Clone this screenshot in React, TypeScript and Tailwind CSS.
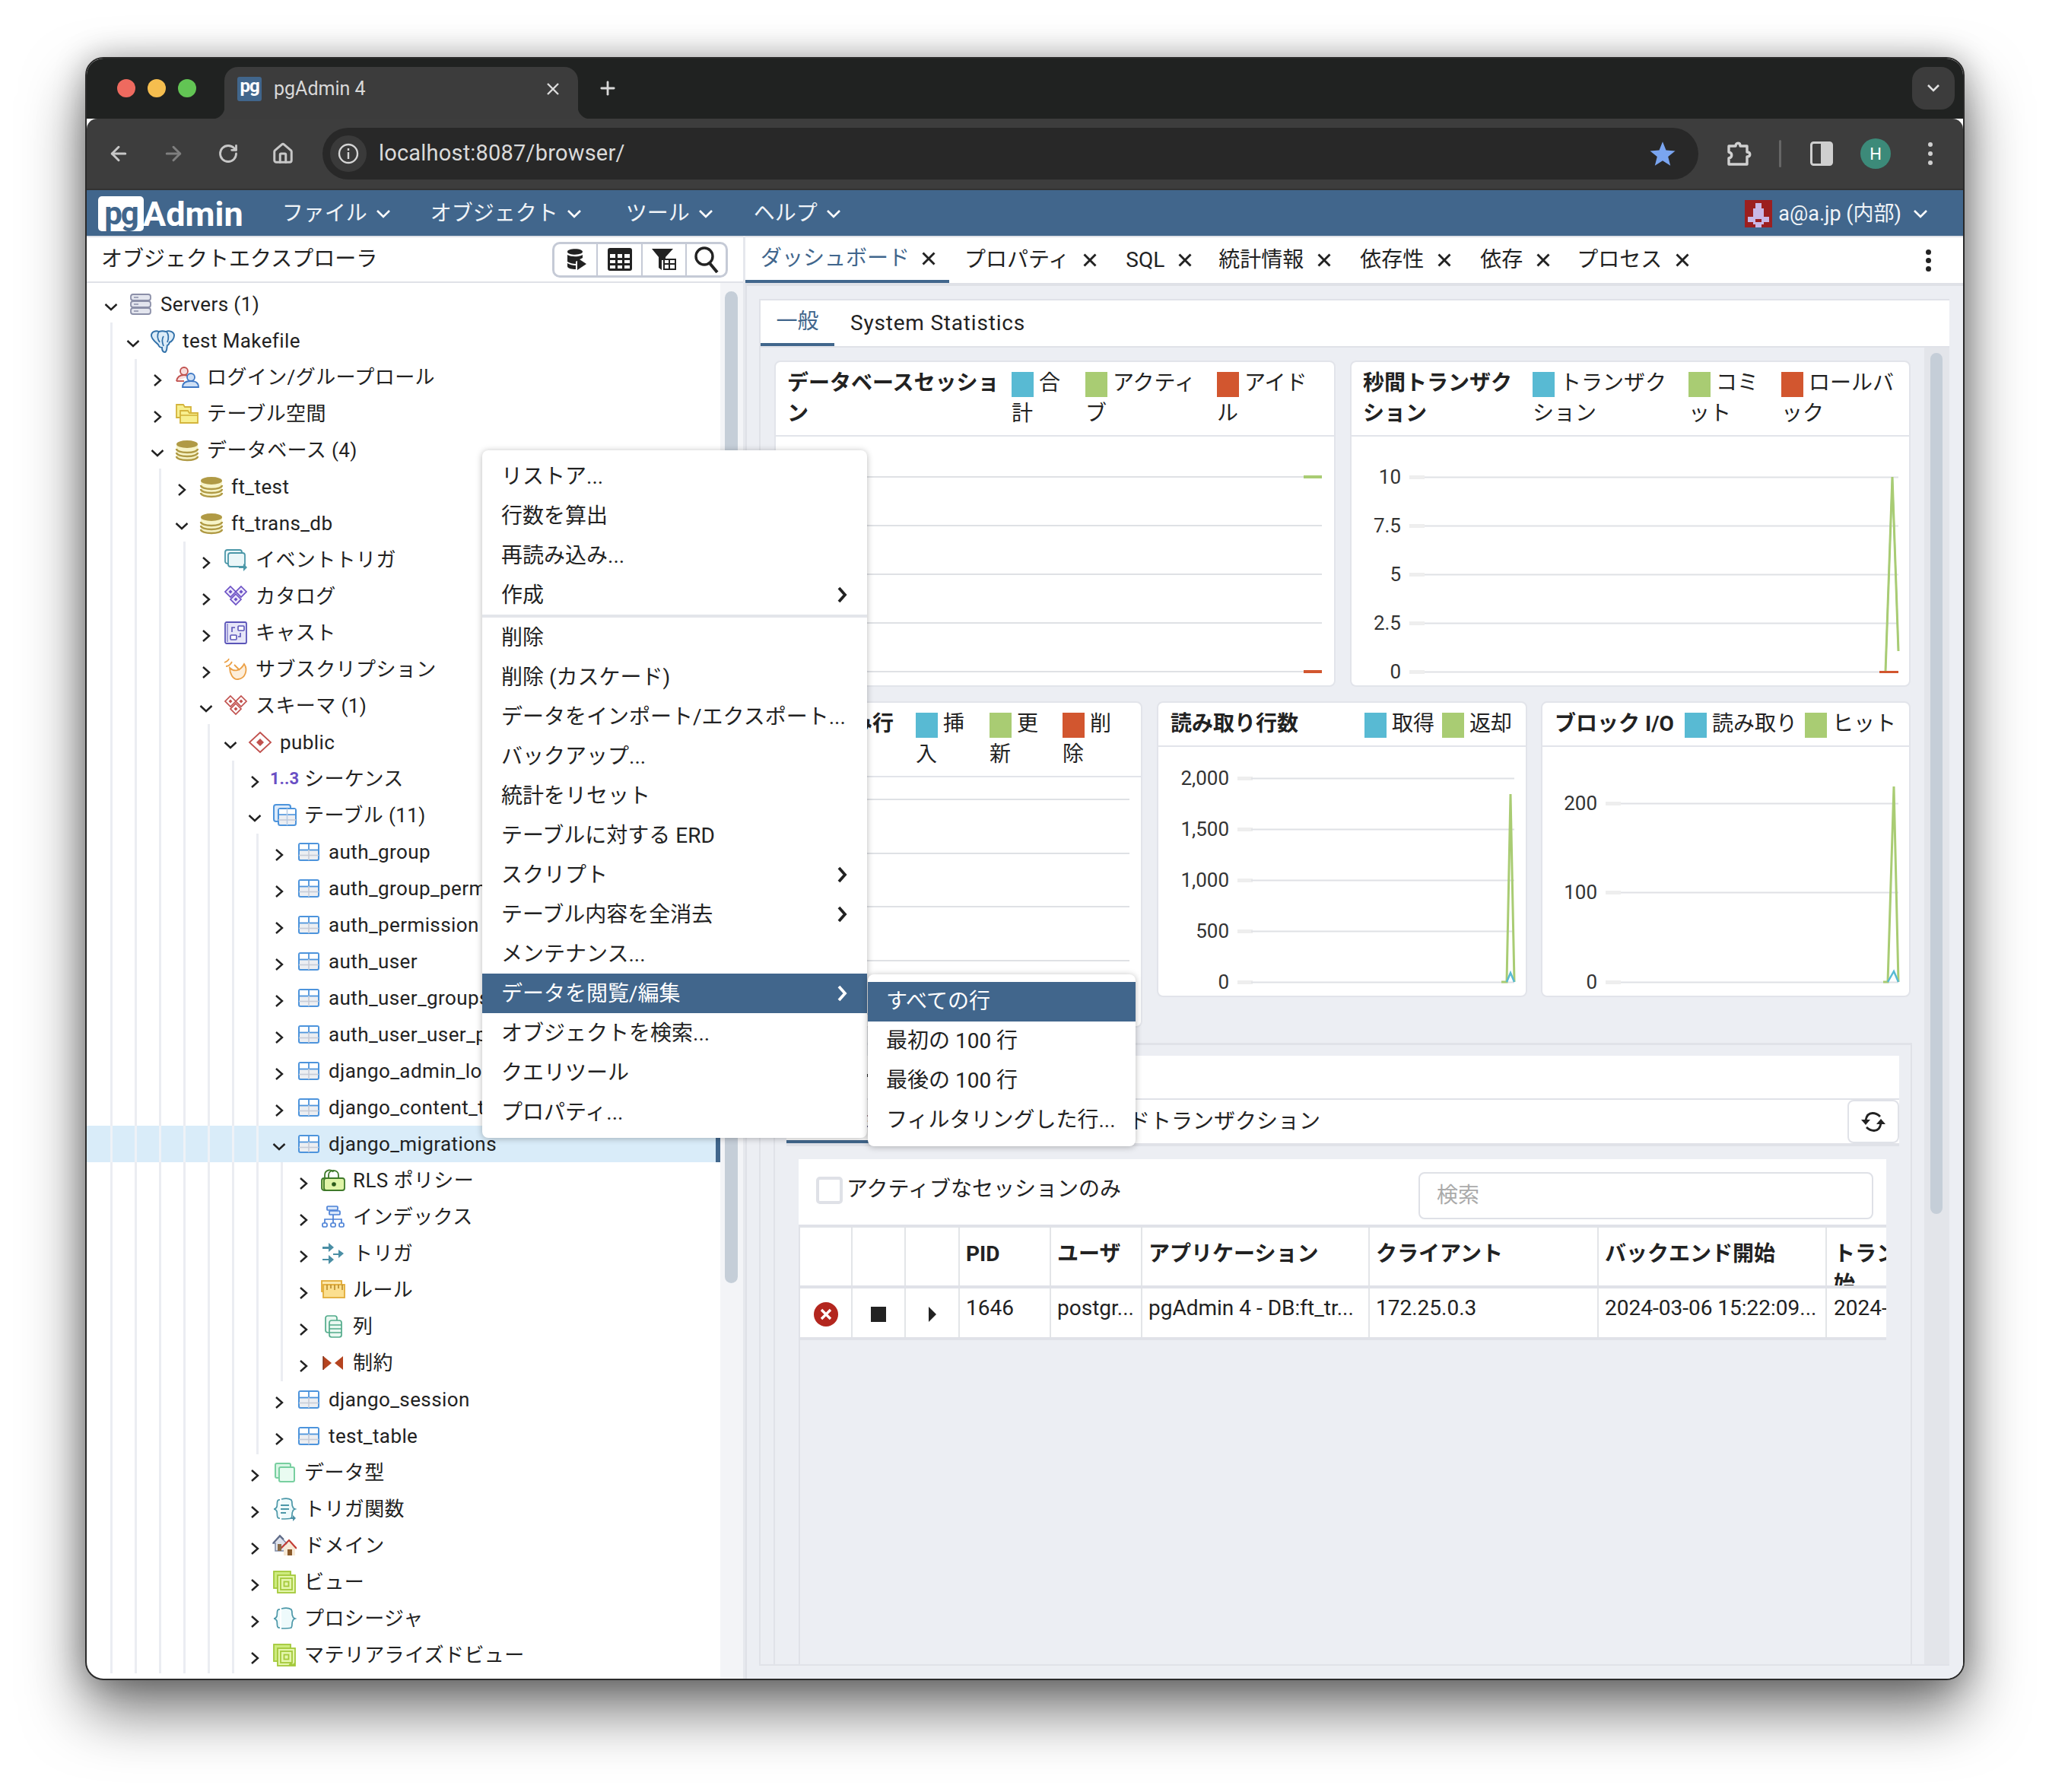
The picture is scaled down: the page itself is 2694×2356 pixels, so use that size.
import React from "react";
import { ArrowLeft, ArrowRight, RotateCw, Home, Plus } from "lucide-react";

const ChevR = () => (
  <svg width="14" height="18" viewBox="0 0 14 18" fill="none" stroke="#222" strokeWidth="2.4"><path d="M3 2l8 7-8 7" /></svg>
);
const ChevD = () => (
  <svg width="18" height="12" viewBox="0 0 18 12" fill="none" stroke="#222" strokeWidth="2.4"><path d="M1.5 2l7.5 7 7.5-7" /></svg>
);
const NavChev = () => (
  <svg width="20" height="14" viewBox="0 0 20 14" fill="none" stroke="#fff" strokeWidth="2.6"><path d="M2 3l8 8 8-8" /></svg>
);
const Xi = () => (
  <svg width="20" height="20" viewBox="0 0 20 20" fill="none" stroke="#222" strokeWidth="2.9"><path d="M2.5 2.5l15 15M17.5 2.5l-15 15" /></svg>
);

const S = ({ children }: { children: React.ReactNode }) => (
  <svg width="32" height="32" viewBox="0 0 32 32" fill="none">{children}</svg>
);

const IServers = () => (
  <S>
    {[3, 12, 21].map((y) => (
      <g key={y}>
        <rect x="3" y={y} width="26" height="8" rx="3" fill="#e3e5ee" stroke="#8b8fa8" strokeWidth="1.8" />
        <path d={`M7 ${y + 4}h6`} stroke="#8b8fa8" strokeWidth="1.5" />
      </g>
    ))}
  </S>
);
const IPg = () => (
  <S>
    <path d="M1 9c0-5 6-7 10-5 3-1 6-1 9 0 4-2 11 0 11 5 0 4-3 8-6 9-1 2-1 4-3 4-1 3 0 8-3 9-3 0-4-2-4-6-2 0-4-1-5-4-3-3-9-7-9-12z" fill="#dcecf8" stroke="#2f6fa8" strokeWidth="1.9" />
    <path d="M11 4c-3 4-2 10 1 14M21 4c3 4 3 9 1 14M17 10c-2 3-2 8 0 13" stroke="#2f6fa8" strokeWidth="1.7" />
  </S>
);
const IRoles = () => (
  <S>
    <circle cx="12" cy="8" r="5" fill="#f8dcdc" stroke="#c0504d" strokeWidth="1.8" />
    <path d="M2 21c1-6 5-8 10-8 3 0 5 1 6 2" stroke="#c0504d" strokeWidth="1.8" fill="#f8dcdc" />
    <path d="M2 21h10" stroke="#c0504d" strokeWidth="1.8" />
    <circle cx="21" cy="16" r="5" fill="#cfe0f5" stroke="#3f78c4" strokeWidth="1.8" />
    <path d="M10 29c0-6 5-8 11-8s10 2 10 8z" fill="#cfe0f5" stroke="#3f78c4" strokeWidth="1.8" />
  </S>
);
const ITablespace = () => (
  <S>
    <path d="M2 4h9l2 3h8v14H2z" fill="#f7ef8f" stroke="#d4b43c" strokeWidth="1.8" />
    <path d="M7 12h10l2 3h11v13H7z" fill="#f7ef8f" stroke="#d4b43c" strokeWidth="1.8" />
    <path d="M7 18h23" stroke="#d4b43c" strokeWidth="1.6" />
  </S>
);
const IDb = () => (
  <S>
    <path d="M2 8v16c0 3 6 5 14 5s14-2 14-5V8z" fill="#f7f4c8" />
    <ellipse cx="16" cy="8" rx="14" ry="5" fill="#b09a45" />
    <path d="M2 14c0 3 6 5 14 5s14-2 14-5M2 19c0 3 6 5 14 5s14-2 14-5M2 24c0 3 6 5 14 5s14-2 14-5" stroke="#b09a45" strokeWidth="2.4" />
  </S>
);
const IEvent = () => (
  <S>
    <rect x="2" y="3" width="22" height="18" rx="3" fill="#eaf6f8" stroke="#4b97a8" strokeWidth="1.8" />
    <rect x="6" y="7" width="22" height="18" rx="3" fill="#eaf6f8" stroke="#4b97a8" strokeWidth="1.8" />
    <path d="M20 26h8" stroke="#4b97a8" strokeWidth="2" />
    <path d="M26 21l5 5-5 5z" fill="#4b97a8" />
  </S>
);
const Diamonds = ({ c, f }: { c: string; f: string }) => (
  <S>
    {[
      [9, 10],
      [23, 10],
      [16, 20],
    ].map(([x, y]) => (
      <g key={x + "-" + y}>
        <path d={`M${x} ${y - 7}l7 7-7 7-7-7z`} fill={f} stroke={c} strokeWidth="1.7" />
        <path d={`M${x} ${y - 2.5}l2.5 2.5-2.5 2.5-2.5-2.5z`} fill={c} />
      </g>
    ))}
  </S>
);
const ICast = () => (
  <S>
    <rect x="2" y="2" width="28" height="28" rx="2" fill="#e6e6f8" stroke="#5a54b8" strokeWidth="1.8" />
    <path d="M5 4v24" stroke="#5a54b8" strokeWidth="1" />
    <rect x="9" y="19" width="8" height="6" rx="1" fill="#fff" stroke="#5a54b8" strokeWidth="1.6" />
    <rect x="19" y="7" width="8" height="6" rx="1" fill="#fff" stroke="#5a54b8" strokeWidth="1.6" />
    <path d="M15 9h-4v6M22 16v5h-3" stroke="#5a54b8" strokeWidth="1.6" />
  </S>
);
const ISub = () => (
  <S>
    <path d="M8 14c6 6 14 4 19-5 5 7 2 19-8 20-7 1-11-8-11-15z" fill="#fdeeda" stroke="#eba046" strokeWidth="1.8" />
    <path d="M14 10l7 7M1 7c3-1 5-2 6-5M3 12c3 0 6-2 8-6" stroke="#eba046" strokeWidth="1.8" />
  </S>
);
const IPublic = () => (
  <S>
    <path d="M16 3l14 13-14 13L2 16z" fill="#fff" stroke="#c0504d" strokeWidth="1.8" />
    <path d="M16 11l5 5-5 5-5-5z" fill="#c0504d" />
  </S>
);
const ITables = () => (
  <S>
    <rect x="2" y="2" width="22" height="22" rx="3" fill="#dceafa" stroke="#4d94dc" strokeWidth="2" />
    <rect x="8" y="7" width="23" height="22" rx="2.5" fill="#eceef2" stroke="#4d94dc" strokeWidth="2" />
    <rect x="9" y="8" width="21" height="7" fill="#fff" />
    <path d="M8 15h23" stroke="#4d94dc" strokeWidth="1.6" />
    <path d="M8 22h23" stroke="#c7cbd6" strokeWidth="1.6" />
    <path d="M19.5 7v22" stroke="#b9cbe4" strokeWidth="1.6" />
  </S>
);
const ITable = () => (
  <S>
    <rect x="3" y="5" width="26" height="22" rx="2" fill="#eceef2" stroke="#4d94dc" strokeWidth="2" />
    <rect x="4" y="6" width="24" height="7" fill="#fff" />
    <path d="M3 13.5h26" stroke="#4d94dc" strokeWidth="1.8" />
    <path d="M3 20.5h26" stroke="#c7cbd6" strokeWidth="1.6" />
    <path d="M16 5v8" stroke="#4d94dc" strokeWidth="1.8" />
    <path d="M16 13v14" stroke="#c7cbd6" strokeWidth="1.6" />
  </S>
);
const ILock = () => (
  <S>
    <path d="M5 13V9c0-8 10-8 11-4" stroke="#3f7a2a" strokeWidth="1.8" />
    <rect x="1" y="13" width="20" height="16" rx="3" fill="#cde88f" stroke="#3f7a2a" strokeWidth="1.8" />
    <path d="M10 13V9c0-8 13-8 13 0v4" stroke="#3f7a2a" strokeWidth="1.8" />
    <rect x="4" y="13" width="27" height="16" rx="3" fill="#e0f4a8" stroke="#3f7a2a" strokeWidth="1.8" />
    <circle cx="17" cy="21" r="2.8" fill="#2b5a1b" />
  </S>
);
const IIndex = () => (
  <S>
    <rect x="8" y="2" width="14" height="5" rx="1" fill="#dbe8fa" stroke="#4a80d6" strokeWidth="1.7" />
    <rect x="11" y="8" width="14" height="5" rx="1" fill="#dbe8fa" stroke="#4a80d6" strokeWidth="1.7" />
    <path d="M16 13v6M5 24v-5h22v5M16 19v5" stroke="#4a80d6" strokeWidth="1.7" />
    <rect x="2" y="24" width="6" height="5" rx="1.5" fill="#fff" stroke="#4a80d6" strokeWidth="1.7" />
    <rect x="13" y="24" width="6" height="5" rx="1.5" fill="#fff" stroke="#4a80d6" strokeWidth="1.7" />
    <rect x="24" y="24" width="6" height="5" rx="1.5" fill="#fff" stroke="#4a80d6" strokeWidth="1.7" />
  </S>
);
const ITrig = () => (
  <S>
    <g fill="#4b8fa5">
      <path d="M2 7h8V2l7 6-7 6v-4H2z" />
      <path d="M16 16h7v-5l7 5-7 6v-4h-7z" />
      <path d="M2 23h8v-5l7 6-7 6v-5H2z" />
    </g>
  </S>
);
const IRule = () => (
  <S>
    <rect x="1" y="4" width="26" height="14" fill="#fbe7ad" stroke="#e2ac38" strokeWidth="1.8" />
    <rect x="3" y="9" width="28" height="17" fill="#fbdf8f" stroke="#e2ac38" strokeWidth="1.8" />
    <path d="M8 9v7M13 9v5M18 9v7M23 9v5M28 9v7" stroke="#b98a2a" strokeWidth="1.6" />
  </S>
);
const ICols = () => (
  <S>
    <rect x="6" y="2" width="15" height="22" rx="3" fill="#eaf8f1" stroke="#52ab8b" strokeWidth="1.7" />
    <rect x="11" y="8" width="16" height="22" rx="3" fill="#eaf8f1" stroke="#52ab8b" strokeWidth="1.7" />
    <path d="M11 14h16M11 19h16M11 24h16" stroke="#52ab8b" strokeWidth="1.6" />
  </S>
);
const IConstraint = () => (
  <S>
    <path d="M3 7l11 9-11 9z" fill="#b5441f" />
    <path d="M29 7L18 16l11 9z" fill="#b5441f" />
    <path d="M3 7v18" stroke="#7a2c12" strokeWidth="1.4" />
  </S>
);
const IType = () => (
  <S>
    <rect x="4" y="4" width="20" height="19" rx="2" fill="#d9f5e5" stroke="#78cfa0" strokeWidth="2" />
    <rect x="9" y="9" width="20" height="19" rx="2" fill="#e9fbf1" stroke="#78cfa0" strokeWidth="2" />
  </S>
);
const Brace = ({ lines }: { lines?: boolean }) => (
  <S>
    <path d="M10 4C5 3 7 10 6 13c-1 2-3 3-4 3 1 0 3 1 4 3 1 3-1 10 4 9M12 3c4-1 10-1 13 1 2 3 0 7 2 9 0 2 3 3 3 3s-3 1-3 3c-2 2 0 6-2 9-3 1-9 1-13 1" fill="#eefafb" stroke="#4b97a8" strokeWidth="1.7" />
    {lines && <path d="M11 11h11M11 16h11M11 21h7" stroke="#4b97a8" strokeWidth="1.8" />}
    {lines && <path d="M24 27h3v-3l4 4-4 4v-3h-3z" fill="#4b8fa5" />}
  </S>
);
const IDomain = () => (
  <S>
    <path d="M1 13L10 4l9 9v10H4V13z" fill="#dfe3ec" stroke="#7f8aa5" strokeWidth="1.5" />
    <path d="M1 13L10 3l5 5" stroke="#5f6b88" strokeWidth="2" />
    <path d="M14 19l8-8 8 8v10H15V19z" fill="#f7e9d6" />
    <path d="M11 20L22 9l10 11" stroke="#c23b33" strokeWidth="2.2" fill="none" />
    <rect x="20" y="21" width="6" height="8" fill="#8a5a2b" />
    <rect x="7" y="14" width="5" height="9" fill="#8a6a45" />
  </S>
);
const IView = ({ m }: { m?: boolean }) => (
  <S>
    <rect x="2" y="2" width="22" height="22" fill="#cdeb7e" stroke="#a4c93b" strokeWidth="1.8" />
    <rect x="7" y="7" width="23" height="23" fill="#e4f6ac" stroke="#a4c93b" strokeWidth="1.8" />
    <rect x="11" y="11" width="15" height="15" fill="none" stroke="#a4c93b" strokeWidth="1.8" />
    <rect x="15.5" y="15.5" width="6" height="6" fill="none" stroke="#a4c93b" strokeWidth="1.8" />
    {m && <path d="M21 30l3-5 3 3 3-3v5" fill="#a4c93b" />}
  </S>
);
const ISeq = () => (
  <span className="whitespace-nowrap text-[22px] font-bold leading-none text-[#6a4fc4]">1..3</span>
);

const Sync = () => (
  <svg width="34" height="28" viewBox="0 0 34 28" fill="none" stroke="#222" strokeWidth="2.8">
    <path d="M26 7C23 4 20 2.5 16 2.5 11 2.5 8 6 7 12" />
    <path d="M8 21c3 3 6 4.5 10 4.5 5 0 8-3.500 9-9.500" />
    <path d="M1 11h12l-6 7z" fill="#222" stroke="none" />
    <path d="M21 17h12l-6-7z" fill="#222" stroke="none" />
  </svg>
);

type R = { d: number; t: string; i: React.ReactNode; o?: boolean; sel?: boolean };
const tbl = (t: string, o?: boolean, sel?: boolean): R => ({ d: 7, t, i: <ITable />, o, sel });
const rows: R[] = [
  { d: 0, t: "Servers (1)", i: <IServers />, o: true },
  { d: 1, t: "test Makefile", i: <IPg />, o: true },
  { d: 2, t: "ログイン/グループロール", i: <IRoles /> },
  { d: 2, t: "テーブル空間", i: <ITablespace /> },
  { d: 2, t: "データベース (4)", i: <IDb />, o: true },
  { d: 3, t: "ft_test", i: <IDb /> },
  { d: 3, t: "ft_trans_db", i: <IDb />, o: true },
  { d: 4, t: "イベントトリガ", i: <IEvent /> },
  { d: 4, t: "カタログ", i: <Diamonds c="#6a4fc4" f="#ece8fb" /> },
  { d: 4, t: "キャスト", i: <ICast /> },
  { d: 4, t: "サブスクリプション", i: <ISub /> },
  { d: 4, t: "スキーマ (1)", i: <Diamonds c="#c0504d" f="#fff" />, o: true },
  { d: 5, t: "public", i: <IPublic />, o: true },
  { d: 6, t: "シーケンス", i: <ISeq /> },
  { d: 6, t: "テーブル (11)", i: <ITables />, o: true },
  tbl("auth_group"),
  tbl("auth_group_permissions"),
  tbl("auth_permission"),
  tbl("auth_user"),
  tbl("auth_user_groups"),
  tbl("auth_user_user_permissions"),
  tbl("django_admin_log"),
  tbl("django_content_type"),
  tbl("django_migrations", true, true),
  { d: 8, t: "RLS ポリシー", i: <ILock /> },
  { d: 8, t: "インデックス", i: <IIndex /> },
  { d: 8, t: "トリガ", i: <ITrig /> },
  { d: 8, t: "ルール", i: <IRule /> },
  { d: 8, t: "列", i: <ICols /> },
  { d: 8, t: "制約", i: <IConstraint /> },
  tbl("django_session"),
  tbl("test_table"),
  { d: 6, t: "データ型", i: <IType /> },
  { d: 6, t: "トリガ関数", i: <Brace lines /> },
  { d: 6, t: "ドメイン", i: <IDomain /> },
  { d: 6, t: "ビュー", i: <IView /> },
  { d: 6, t: "プロシージャ", i: <Brace /> },
  { d: 6, t: "マテリアライズドビュー", i: <IView m /> },
];

const TreeRow = ({ r }: { r: R }) => (
  <div className={`flex h-[48px] shrink-0 items-center ${r.d === 0 ? "pl-[34px]" : "pl-[31px]"} ${r.sel ? "border-r-[6px] border-[#41668c] bg-[#d9ecf9]" : ""}`}>
    {Array.from({ length: r.d }).map((_, i) => (
      <span key={i} className={`h-full w-[32px] shrink-0 border-l-[3px] ${r.sel ? "border-[#eef2f7]" : "border-[#ebedf2]"}`} />
    ))}
    <span className="-ml-[14px] mt-[8px] flex w-[24px] shrink-0 justify-center">{r.o ? <ChevD /> : <ChevR />}</span>
    <span className="ml-[11px] flex w-[32px] shrink-0 justify-center">{r.i}</span>
    <span className="ml-[10px] whitespace-nowrap text-[26px] tracking-[0.4px] text-[#222]">{r.t}</span>
  </div>
);

const Legend = ({ c, w, children }: { c: string; w: string; children: React.ReactNode }) => (
  <div className={`shrink-0 whitespace-nowrap font-normal ${w}`}>
    <span className={`mr-[7px] inline-block h-[33px] w-[29px] align-middle ${c}`} />
    {children}
  </div>
);
const BLUE = "bg-[#58bad3]";
const GREEN = "bg-[#a9cc73]";
const RED = "bg-[#d2562f]";

const Chart = ({ x, y, w, h, labels, tx, lx, ex, lines, children }: { x: number; y: number; w: number; h: number; labels: [string, number][]; tx: number; lx: number; ex: number; lines?: number[]; children?: React.ReactNode }) => (
  <svg viewBox={`${x} ${y} ${w} ${h}`} className="block" width={w} height={h}>
    {labels.map(([t, yy]) => (
      <g key={t}>
        <text x={tx} y={yy + 9} textAnchor="end" fontSize="26" fill="#333">{t}</text>
        <rect x={tx + 11} y={yy - 2} width="20" height="5" fill="#eeeeee" />
        <rect x={lx} y={yy - 0.5} width={ex - lx} height="2" fill="#dfe1e5" />
      </g>
    ))}
    {lines?.map((yy) => <rect key={yy} x={lx} y={yy} width={ex - lx} height="2" fill="#dfe1e5" />)}
    {children}
  </svg>
);

const Card = ({ w, head, children, hh }: { w: string; head: React.ReactNode; children: React.ReactNode; hh: string }) => (
  <div className={`shrink-0 overflow-hidden rounded-[8px] border-2 border-[#e2e4ea] bg-white ${w}`}>
    <div className={`flex border-b-2 border-[#e2e4ea] pl-[15px] pt-[8px] text-[28px] font-bold leading-[40px] text-[#222] ${hh}`}>{head}</div>
    {children}
  </div>
);

const menu: { t: string; sub?: boolean; active?: boolean; div?: boolean }[] = [
  { t: "リストア..." },
  { t: "行数を算出" },
  { t: "再読み込み..." },
  { t: "作成", sub: true, div: true },
  { t: "削除" },
  { t: "削除 (カスケード)" },
  { t: "データをインポート/エクスポート..." },
  { t: "バックアップ..." },
  { t: "統計をリセット" },
  { t: "テーブルに対する ERD" },
  { t: "スクリプト", sub: true },
  { t: "テーブル内容を全消去", sub: true },
  { t: "メンテナンス..." },
  { t: "データを閲覧/編集", sub: true, active: true },
  { t: "オブジェクトを検索..." },
  { t: "クエリツール" },
  { t: "プロパティ..." },
];

const tabs: [string, string][] = [
  ["ダッシュボード", ""],
  ["プロパティ", "ml-[20px]"],
  ["SQL", "ml-[37px]"],
  ["統計情報", "ml-[34px]"],
  ["依存性", "ml-[37px]"],
  ["依存", "ml-[37px]"],
  ["プロセス", "ml-[34px]"],
];
const cols = "grid-cols-[69px_70px_71px_120px_120px_299px_301px_300px_78px]";

export default function App() {
  return (
    <div className="h-[2356px] w-[2694px] overflow-hidden bg-white pl-[112px] pt-[75px] font-['Roboto','Noto_Sans_CJK_JP',sans-serif] text-[28px] text-[#222]">
      <div className="relative flex h-[2134px] w-[2471px] flex-col overflow-hidden rounded-[24px] border-2 border-[#2a2a2a] bg-white shadow-[0_40px_80px_rgba(0,0,0,0.55),0_0_40px_rgba(0,0,0,0.28)]">
        {/* tab strip */}
        <div className="flex h-[79px] shrink-0 items-end bg-[#202221]">
          <div className="flex h-full w-[181px] items-center gap-[16px] pb-[2px] pl-[40px]">
            <span className="h-[24px] w-[24px] rounded-full bg-[#ee6a5f]" />
            <span className="h-[24px] w-[24px] rounded-full bg-[#f5be4f]" />
            <span className="h-[24px] w-[24px] rounded-full bg-[#62c554]" />
          </div>
          <div className="relative flex h-[68px] w-[465px] items-center rounded-t-[18px] bg-[#3c3c3c] pb-[10px] pl-[17px]">
            <span className="absolute -left-[16px] bottom-0 h-[16px] w-[16px] bg-[radial-gradient(circle_at_0_0,#202221_16px,#3c3c3c_17px)]" />
            <span className="absolute -right-[16px] bottom-0 h-[16px] w-[16px] bg-[radial-gradient(circle_at_100%_0,#202221_16px,#3c3c3c_17px)]" />
            <span className="flex h-[32px] w-[32px] items-start justify-center rounded-[3px] bg-[#41668c] text-[24px] font-bold leading-[24px] tracking-[-1px] text-white">pg</span>
            <span className="ml-[16px] text-[25px] text-[#d8d8d8]">pgAdmin 4</span>
            <span className="ml-auto mr-[24px] text-[#dcdcdc]">
              <svg width="18" height="18" viewBox="0 0 18 18" fill="none" stroke="#dcdcdc" strokeWidth="2.4"><path d="M2 2l14 14M16 2L2 16" /></svg>
            </span>
          </div>
          <div className="mb-[14px] ml-[25px] flex h-[52px] items-center text-[#d8d8d8]"><Plus size={28} strokeWidth={2.4} /></div>
          <div className="mb-[12px] ml-auto mr-[11px] flex h-[56px] w-[56px] items-center justify-center rounded-[18px] bg-[#3c3c3c]">
            <svg width="18" height="12" viewBox="0 0 18 12" fill="none" stroke="#e0e0e0" strokeWidth="2.6"><path d="M2 2l7 7 7-7" /></svg>
          </div>
        </div>
        {/* toolbar */}
        <div className="flex h-[94px] shrink-0 items-center rounded-t-[14px] border-b-2 border-[#333] bg-[#3d3d3d]">
          <div className="flex w-[310px] items-center text-[#c7c7c7]">
            <span className="flex w-[72px] justify-center pl-[12px] text-[#c7c7c7]"><ArrowLeft size={30} strokeWidth={2.4} /></span>
            <span className="flex w-[72px] justify-center pl-[12px] text-[#7f7f7f]"><ArrowRight size={30} strokeWidth={2.4} /></span>
            <span className="flex w-[72px] justify-center pl-[12px]"><RotateCw size={28} strokeWidth={2.4} /></span>
            <span className="flex w-[72px] justify-center pl-[12px]"><Home size={30} strokeWidth={2.4} /></span>
          </div>
          <div className="flex h-[68px] w-[1809px] items-center rounded-full bg-[#282828] pl-[10px] pr-[29px]">
            <span className="flex h-[48px] w-[48px] items-center justify-center rounded-full bg-[#3a3a3a]">
              <svg width="28" height="28" viewBox="0 0 28 28" fill="none" stroke="#d5d5d5" strokeWidth="2.4"><circle cx="14" cy="14" r="12" /><path d="M14 12v9M14 7v3" /></svg>
            </span>
            <span className="ml-[16px] text-[29px] tracking-[0.2px] text-[#dadada]">localhost:8087/browser/</span>
            <svg className="ml-auto" width="36" height="36" viewBox="0 0 24 24" fill="#7aa5f0"><path d="M12 1.500l3 7.500 8 .6-6.200 5.100 2 7.800L12 18.200l-6.800 4.300 2-7.800L1 9.600l8-.6z" /></svg>
          </div>
          <svg className="ml-[36px]" width="34" height="36" viewBox="0 0 34 36" fill="none" stroke="#d0d0d0" strokeWidth="3.4"><path d="M4 8h9c0-5 6-5 6 0h9v8c5 0 5 6 0 6v10H4v-8c5-1 5-7 0-8z" strokeLinejoin="round" /></svg>
          <span className="ml-[36px] h-[36px] w-[3px] rounded bg-[#666]" />
          <svg className="ml-[38px]" width="30" height="32" viewBox="0 0 30 32"><rect x="1.500" y="1.500" width="27" height="29" rx="3" fill="none" stroke="#cfcfcf" strokeWidth="3" /><rect x="14" y="2" width="14" height="28" fill="#cfcfcf" /></svg>
          <span className="ml-[36px] flex h-[40px] w-[40px] items-center justify-center rounded-full bg-[#3c8a79] text-[22px] text-white">H</span>
          <span className="ml-[49px] flex flex-col gap-[6px]">
            <span className="h-[6px] w-[6px] rounded-full bg-[#cfcfcf]" />
            <span className="h-[6px] w-[6px] rounded-full bg-[#cfcfcf]" />
            <span className="h-[6px] w-[6px] rounded-full bg-[#cfcfcf]" />
          </span>
        </div>
        {/* nav bar */}
        <div className="flex h-[60px] shrink-0 items-center bg-[#41668c] pl-[15px] pt-[2px] text-[#f0f4f8]">
          <div className="flex items-center">
            <span className="flex h-[46px] w-[60px] items-center justify-center rounded-[5px] bg-white text-[42px] font-bold leading-none tracking-[-2px] text-[#41668c]">pg</span>
            <span className="-ml-[1px] text-[45px] font-bold leading-none text-white">Admin</span>
          </div>
          <span className="ml-[51px] flex items-center gap-[11px]">ファイル<NavChev /></span>
          <span className="ml-[52px] flex items-center gap-[11px]">オブジェクト<NavChev /></span>
          <span className="ml-[58px] flex items-center gap-[11px]">ツール<NavChev /></span>
          <span className="ml-[53px] flex items-center gap-[11px]">ヘルプ<NavChev /></span>
          <div className="ml-auto flex items-center pr-[46px]">
            <svg width="36" height="36" viewBox="0 0 10 10" shapeRendering="crispEdges">
              <rect width="10" height="10" fill="#9c1f1f" />
              <path d="M4 1h2v2h1v3h2v2H7v1H6v1H4V9H3V8H1V6h2V3h1z" fill="#c9b8e6" />
              <rect x="4" y="7" width="2" height="1" fill="#9c1f1f" />
            </svg>
            <span className="ml-[8px] text-[27px]">a@a.jp (内部)</span>
            <span className="ml-[15px]"><NavChev /></span>
          </div>
        </div>
        {/* body */}
        <div className="flex min-h-0 flex-1">
          {/* object explorer */}
          <div className="flex w-[863px] shrink-0 flex-col">
            <div className="flex h-[62px] shrink-0 items-center border-b-2 border-t-2 border-b-[#e0e2e8] border-t-[#e0e2e8] pl-[19px] pr-[20px]">
              <span>オブジェクトエクスプローラ</span>
              <div className="ml-auto flex h-[47px] w-[231px] items-center rounded-[10px] border-[3px] border-[#c5cad6]">
                <span className="flex h-full w-[57px] items-center justify-center border-r-[2px] border-[#c5cad6]">
                  <svg width="32" height="32" viewBox="0 0 32 32" fill="#222"><path d="M5 6c0-5 20-5 20 0s-20 5-20 0zM5 10c5 3 15 3 20 0v4L16 19v3c-4 0-8-1-11-3zM5 21c3 2 7 3 11 3v5c-5 0-11-1-11-4zM18 14l12 8-12 8z" /></svg>
                </span>
                <span className="flex h-full w-[59px] items-center justify-center border-r-[2px] border-[#c5cad6]">
                  <svg width="32" height="30" viewBox="0 0 32 30" fill="#222"><path fillRule="evenodd" d="M3 0h26a3 3 0 013 3v24a3 3 0 01-3 3H3a3 3 0 01-3-3V3a3 3 0 013-3zM3 8v5h7V8zm10 0v5h6V8zm9 0v5h7V8zM3 16v4h7v-4zm10 0v4h6v-4zm9 0v4h7v-4zM3 23v4h7v-4zm10 0v4h6v-4zm9 0v4h7v-4z" /></svg>
                </span>
                <span className="flex h-full w-[58px] items-center justify-center border-r-[2px] border-[#c5cad6]">
                  <svg width="34" height="32" viewBox="0 0 34 32" fill="#222"><path d="M1 2h28L19 13v4h-5v13l-4-3V13z" /><path fillRule="evenodd" d="M16 15h17v15H16zm2 2v4h5v-4zm7 0v4h6v-4zm-7 6v5h5v-5zm7 0v5h6v-5z" /></svg>
                </span>
                <span className="flex h-full flex-1 items-center justify-center">
                  <svg width="34" height="36" viewBox="0 0 34 36" fill="none" stroke="#222" strokeWidth="3.4"><circle cx="14" cy="14" r="11" /><path d="M21 23l10 12" strokeWidth="4" /></svg>
                </span>
              </div>
            </div>
            <div className="flex min-h-0 flex-1">
              <div className="flex w-[833px] shrink-0 flex-col overflow-hidden pt-[4px]">
                {rows.map((r, i) => <TreeRow key={i} r={r} />)}
              </div>
              <div className="w-[30px] shrink-0 bg-[#f3f4f7] pl-[6px] pt-[11px]">
                <div className="h-[1304px] w-[17px] rounded-full bg-[#c5ced8]" />
              </div>
            </div>
          </div>
          <div className="w-[3px] shrink-0 bg-[#e6e8ed]" />
          {/* right panel */}
          <div className="flex min-w-0 flex-1 flex-col">
            <div className="flex h-[62px] shrink-0 items-center border-t-2 border-[#e0e2e8] pr-[42px]">
              {tabs.map(([t, m], i) => (
                <div key={t} className={i === 0 ? "flex h-[60px] items-center gap-[15px] border-b-4 border-[#41668c] pl-[20px] pr-[17px] text-[#41668c]" : `flex items-center gap-[17px] ${m}`}>
                  <span>{t}</span>
                  <Xi />
                </div>
              ))}
              <span className="ml-auto flex flex-col gap-[4px]">
                <span className="h-[7px] w-[7px] rounded-full bg-[#222]" />
                <span className="h-[7px] w-[7px] rounded-full bg-[#222]" />
                <span className="h-[7px] w-[7px] rounded-full bg-[#222]" />
              </span>
            </div>
            <div className="min-h-0 flex-1 overflow-hidden border-l-2 border-t-4 border-l-[#dfe1e7] border-t-[#dfe1e7] bg-[#eceef3] pl-[16px] pr-[18px] pt-[17px]">
              <div className="flex h-[1797px] flex-col border-b-2 border-l-2 border-t-2 border-[#e0e2e8]">
                <div className="flex h-[62px] shrink-0 items-stretch border-b-2 border-[#e0e2e8] bg-white">
                  <div className="flex w-[97px] items-center justify-center border-b-4 border-[#41668c] text-[#41668c]">一般</div>
                  <div className="ml-[21px] flex items-center tracking-[0.8px]">System Statistics</div>
                </div>
                <div className="flex min-h-0 flex-1">
                  <div className="w-[1530px] shrink-0 overflow-hidden pl-[17px] pt-[17px]">
                    {/* row 1 */}
                    <div className="flex gap-[19px] pl-[1px]">
                      <Card w="w-[738px]" hh="h-[98px]" head={<>
                        <div className="w-[295px] shrink-0 whitespace-nowrap">データベースセッショ<br />ン</div>
                        <Legend c={BLUE} w="w-[97px]">合<br />計</Legend>
                        <Legend c={GREEN} w="w-[173px]">アクティ<br />ブ</Legend>
                        <Legend c={RED} w="w-[130px]">アイド<br />ル</Legend>
                      </>}>
                        <Chart x={1020} y={574} w={734} h={327} labels={[]} tx={0} lx={1100} ex={1738} lines={[626, 690, 754, 818, 882]}>
                          <rect x="1714" y="625" width="24" height="4" fill="#a9cc73" />
                          <rect x="1714" y="881" width="24" height="4" fill="#d2562f" />
                        </Chart>
                      </Card>
                      <Card w="w-[737px]" hh="h-[98px]" head={<>
                        <div className="w-[223px] shrink-0 whitespace-nowrap">秒間トランザク<br />ション</div>
                        <Legend c={BLUE} w="w-[205px]">トランザク<br />ション</Legend>
                        <Legend c={GREEN} w="w-[122px]">コミ<br />ット</Legend>
                        <Legend c={RED} w="w-[150px]">ロールバ<br />ック</Legend>
                      </>}>
                        <Chart x={1777} y={574} w={733} h={327} labels={[["10", 627], ["7.5", 691], ["5", 755], ["2.5", 819], ["0", 883]]} tx={1842} lx={1873} ex={2496}>
                          <path d="M2479 883L2488 627L2496 856" stroke="#58bad3" strokeWidth="2" fill="none" />
                          <path d="M2479 883L2488 627L2496 856" stroke="#a9cc73" strokeWidth="3" fill="none" />
                          <rect x="2471" y="882" width="25" height="3" fill="#d2562f" />
                        </Chart>
                      </Card>
                    </div>
                    {/* row 2 */}
                    <div className="mt-[19px] flex items-start pl-[1px]">
                      <Card w="w-[484px]" hh="h-[98px]" head={<>
                        <div className="w-[169px] shrink-0 whitespace-nowrap">書き込み行</div>
                        <Legend c={BLUE} w="w-[97px]">挿<br />入</Legend>
                        <Legend c={GREEN} w="w-[96px]">更<br />新</Legend>
                        <Legend c={RED} w="w-[90px]">削<br />除</Legend>
                      </>}>
                        <Chart x={1020} y={1021} w={480} h={327} labels={[]} tx={0} lx={1100} ex={1485} lines={[1049, 1120, 1190, 1261, 1331]} />
                      </Card>
                      <div className="ml-[19px]">
                        <Card w="w-[487px]" hh="h-[58px]" head={<>
                          <div className="w-[256px] shrink-0 whitespace-nowrap pl-[1px]">読み取り行数</div>
                          <Legend c={BLUE} w="w-[102px]">取得</Legend>
                          <Legend c={GREEN} w="w-[100px]">返却</Legend>
                        </>}>
                          <Chart x={1523} y={982} w={483} h={327} labels={[["2,000", 1023], ["1,500", 1090], ["1,000", 1157], ["500", 1224], ["0", 1291]]} tx={1616} lx={1645} ex={1991}>
                            <path d="M1974 1291h7L1986 1044L1991 1291" stroke="#a9cc73" strokeWidth="3" fill="none" />
                            <path d="M1981 1291L1986 1279L1991 1291" stroke="#58bad3" strokeWidth="2.500" fill="none" />
                          </Chart>
                        </Card>
                      </div>
                      <div className="ml-[18px]">
                        <Card w="w-[486px]" hh="h-[58px]" head={<>
                          <div className="w-[172px] shrink-0 whitespace-nowrap pl-[1px]">ブロック I/O</div>
                          <Legend c={BLUE} w="w-[158px]">読み取り</Legend>
                          <Legend c={GREEN} w="w-[130px]">ヒット</Legend>
                        </>}>
                          <Chart x={2028} y={982} w={482} h={327} labels={[["200", 1056], ["100", 1173], ["0", 1291]]} tx={2100} lx={2131} ex={2496}>
                            <path d="M2476 1291h6L2490 1034L2496 1291" stroke="#a9cc73" strokeWidth="3" fill="none" />
                            <path d="M2482 1291L2490 1277L2496 1291" stroke="#58bad3" strokeWidth="2.500" fill="none" />
                          </Chart>
                        </Card>
                      </div>
                    </div>
                    {/* activity panel */}
                    <div className="mt-[20px] flex h-[830px] w-[1497px] flex-col border-l-2 border-r-2 border-t-[3px] border-[#e0e2e8] pl-[15px] pr-[15px] pt-[14px]">
                      <div className="flex h-[58px] shrink-0 items-center border-b-2 border-[#e0e2e8] bg-white pl-[16px] font-bold">サーバーアクティビティ</div>
                      <div className="flex h-[61px] shrink-0 items-stretch border-b-4 border-[#e0e2e8] bg-white">
                        <div className="flex items-center border-b-4 border-[#41668c] px-[16px] text-[#41668c]">セッション</div>
                        <div className="ml-[17px] flex items-center px-[16px]">ロック</div>
                        <div className="ml-[17px] flex items-center pl-[16px]">プリペアドトランザクション</div>
                        <div className="ml-auto flex w-[68px] items-center justify-center rounded-[8px] border-2 border-[#e0e2e8]"><Sync /></div>
                      </div>
                      <div className="ml-[16px] mt-[17px] flex w-[1430px] flex-1 flex-col">
                        <div className="flex h-[90px] shrink-0 items-center border-b-4 border-[#e0e2e8] bg-white pl-[23px] pr-[17px]">
                          <span className="-mt-[4px] h-[36px] w-[35px] rounded-[5px] border-[4px] border-[#dfe1e7] bg-white" />
                          <span className="-mt-[6px] ml-[5px]">アクティブなセッションのみ</span>
                          <div className="ml-auto mt-[10px] flex h-[62px] w-[598px] items-center rounded-[8px] border-2 border-[#dfe1e7] pl-[22px] text-[#aaa]">検索</div>
                        </div>
                        <div className={`grid h-[80px] shrink-0 ${cols} overflow-hidden border-b-4 border-l-2 border-[#e0e2e8] bg-white font-bold leading-[40px]`}>
                          {["", "", "", "PID", "ユーザ", "アプリケーション", "クライアント", "バックエンド開始"].map((t, i) => (
                            <div key={i} className="whitespace-nowrap border-r-2 border-[#e3e5e8] pl-[8px] pt-[15px]">{t}</div>
                          ))}
                          <div className="whitespace-nowrap pl-[9px] pt-[15px]">トランザクション開<br />始</div>
                        </div>
                        <div className={`grid h-[68px] shrink-0 ${cols} overflow-hidden border-b-4 border-l-2 border-[#e0e2e8] bg-white leading-[40px]`}>
                          <div className="flex items-center justify-center border-r-2 border-[#e3e5e8] pt-[3px]">
                            <svg width="32" height="32" viewBox="0 0 32 32"><circle cx="16" cy="16" r="16" fill="#b3261e" /><path d="M10 10l12 12M22 10L10 22" stroke="#fff" strokeWidth="3.400" /></svg>
                          </div>
                          <div className="flex items-center justify-center border-r-2 border-[#e3e5e8] pt-[3px]"><span className="h-[20px] w-[20px] bg-[#222]" /></div>
                          <div className="flex items-center justify-center border-r-2 border-[#e3e5e8] pt-[3px]">
                            <svg width="12" height="20" viewBox="0 0 12 20" fill="#222"><path d="M1 0l10 10L1 20z" /></svg>
                          </div>
                          {["1646", "postgr...", "pgAdmin 4 - DB:ft_tr...", "172.25.0.3", "2024-03-06 15:22:09..."].map((t) => (
                            <div key={t} className="whitespace-nowrap border-r-2 border-[#e3e5e8] pl-[8px] pt-[6px]">{t}</div>
                          ))}
                          <div className="whitespace-nowrap pl-[9px] pt-[6px]">2024-03-06</div>
                        </div>
                        <div className="flex-1 border-l-2 border-[#e0e2e8]" />
                      </div>
                    </div>
                  </div>
                  <div className="w-[33px] shrink-0 bg-[#e3e5ea] pl-[8px] pt-[7px]">
                    <div className="h-[1132px] w-[16px] rounded-full bg-[#c5ced8]" />
                  </div>
                </div>
              </div>
            </div>
          </div>
        </div>
        {/* context menu */}
        <div className="absolute left-[520px] top-[515px] w-[506px] rounded-[8px] bg-white py-[8px] shadow-[0_1px_8px_rgba(0,0,0,0.28)]">
          {menu.map((m) => (
            <div key={m.t} className={m.div ? "border-b-[4px] border-[#e3e5ea]" : ""}>
              <div className={`flex h-[52px] items-center justify-between pl-[25px] pr-[26px] ${m.active ? "bg-[#41668c] text-white" : ""}`}>
                <span className="whitespace-nowrap pt-[2px]">{m.t}</span>
                {m.sub && (
                  <svg width="14" height="22" viewBox="0 0 14 22" fill="none" stroke={m.active ? "#fff" : "#222"} strokeWidth="3.800"><path d="M3 2l8 9-8 9" /></svg>
                )}
              </div>
            </div>
          ))}
        </div>
        <div className="absolute left-[1027px] top-[1204px] w-[352px] rounded-[8px] bg-white pb-[8px] pt-[10px] shadow-[0_1px_8px_rgba(0,0,0,0.28)]">
          {["すべての行", "最初の 100 行", "最後の 100 行", "フィルタリングした行..."].map((t, i) => (
            <div key={t} className={`flex h-[52px] items-center whitespace-nowrap pl-[24px] ${i === 0 ? "bg-[#41668c] text-white" : ""}`}>{t}</div>
          ))}
        </div>
      </div>
    </div>
  );
}
